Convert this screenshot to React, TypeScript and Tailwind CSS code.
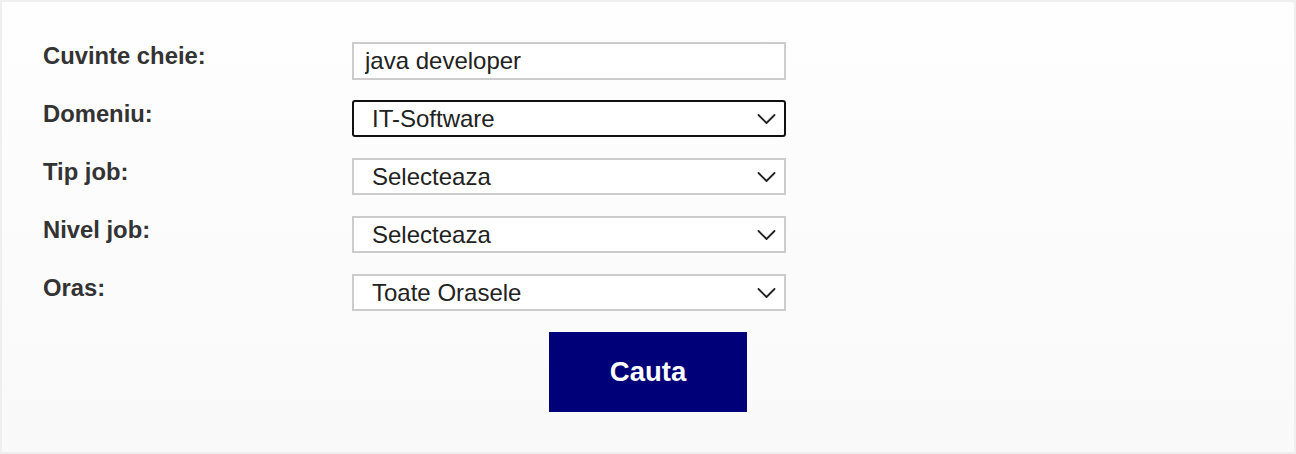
import { useState } from "react";

const rows = [
  { label: "Oras:", options: ["Toate Orasele", "Bucuresti", "Cluj-Napoca", "Iasi", "Timisoara"] },
];

const selC = "box-border h-[37px] w-full appearance-none bg-white pl-[18px] pr-10 text-[24px] leading-none text-[#222] outline-none";

function Chevron() {
  return (
    <svg className="pointer-events-none absolute right-[10px] top-1/2 -translate-y-1/2" width="19" height="11" viewBox="0 0 19 11" fill="none">
      <polyline points="1.5,1.5 9.5,9.5 17.5,1.5" stroke="#222" strokeWidth="1.8" strokeLinecap="round" strokeLinejoin="round" />
    </svg>
  );
}

function Select({ value, options, focused, onChange }: { value: string; options: string[]; focused?: boolean; onChange: (v: string) => void }) {
  return (
    <div className="relative h-[37px] w-[434px]">
      <select
        value={value}
        onChange={(e) => onChange(e.target.value)}
        className={selC + (focused ? " rounded-[3px] border-2 border-[#111]" : " border-2 border-[#cccccc]")}
      >
        {options.map((o) => <option key={o}>{o}</option>)}
      </select>
      <Chevron />
    </div>
  );
}

export default function App() {
  const [keywords, setKeywords] = useState("java developer");
  const [domeniu, setDomeniu] = useState("IT-Software");
  const [tip, setTip] = useState("Selecteaza");
  const [nivel, setNivel] = useState("Selecteaza");
  const [oras, setOras] = useState(rows[0].options[0]);

  const lC = "pt-[2px] text-[23.8px] font-bold leading-[24px] text-[#333]";

  return (
    <div className="h-[454px] w-[1296px] bg-[#efefef] p-[2px]" style={{ fontFamily: '"Liberation Sans", Arial, sans-serif' }}>
      <div className="h-full w-full rounded-tr-[3px] bg-gradient-to-b from-[#fefefe] to-[#f9f9f9] pt-[40px]">
        <div className="grid auto-rows-[58px] grid-cols-[309px_434px] pl-[41px]">
          <div className={lC}>Cuvinte cheie:</div>
          <input
            value={keywords}
            onChange={(e) => setKeywords(e.target.value)}
            className="h-[38px] w-[434px] border-2 border-[#cccccc] bg-white pl-[11px] text-[24px] leading-none text-[#222] outline-none"
          />
          <div className={lC}>Domeniu:</div>
          <Select value={domeniu} options={["IT-Software", "IT-Hardware", "Inginerie", "Vanzari"]} focused onChange={setDomeniu} />
          <div className={lC}>Tip job:</div>
          <Select value={tip} options={["Selecteaza", "Full time", "Part time", "Proiect"]} onChange={setTip} />
          <div className={lC}>Nivel job:</div>
          <Select value={nivel} options={["Selecteaza", "Entry level", "Middle", "Senior", "Manager"]} onChange={setNivel} />
          <div className={lC}>{rows[0].label}</div>
          <Select value={oras} options={rows[0].options} onChange={setOras} />
        </div>
        <div className="flex justify-center">
          <button className="h-[80px] w-[198px] bg-[#000078] text-[27.5px] font-bold text-white">Cauta</button>
        </div>
      </div>
    </div>
  );
}
